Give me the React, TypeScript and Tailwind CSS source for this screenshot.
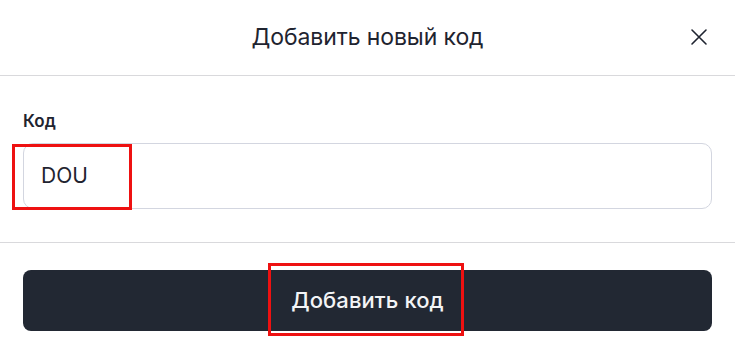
import React from "react";

export default function App() {
  return (
    <div className="relative w-[735px] h-[353px] bg-white overflow-hidden" style={{ fontFamily: "Inter, 'Noto Sans', sans-serif" }}>
      <div className="flex items-center justify-center h-[76px] border-b border-[#d9d9dc] relative">
        <h2 className="text-[23px] text-[#1f2430] font-normal tracking-[-0.1px] leading-none">Добавить новый код</h2>
        <button className="absolute right-[26px] top-[27px] w-[20px] h-[20px] flex items-center justify-center text-[#1f2430]">
          <svg width="18" height="18" viewBox="0 0 18 18" fill="none" stroke="currentColor" strokeWidth="1.6" strokeLinecap="round">
            <path d="M2 2L16 16M16 2L2 16" />
          </svg>
        </button>
      </div>
      <div className="px-[23px] pt-[35px] pb-[33px] border-b border-[#d9d9dc] flex flex-col gap-[12px]">
        <label className="block text-[17px] font-semibold text-[#1f2430] leading-[20px]">Код</label>
        <div className="h-[66px] rounded-[10px] border border-[#d3d6e0] flex items-center px-[17px]">
          <span className="text-[21px] text-[#1f2430]">DOU</span>
        </div>
      </div>
      <div className="px-[23px] pt-[27px]">
        <button className="w-full h-[61px] rounded-[8px] bg-[#222833] text-[#f3f4f6] text-[22px] font-medium flex items-center justify-center tracking-[0.1px]">
          Добавить код
        </button>
      </div>
      <div className="absolute left-[12px] top-[144px] w-[120px] h-[66px] border-[3px] border-[#ee1111] pointer-events-none" />
      <div className="absolute left-[268px] top-[263px] w-[196px] h-[73px] border-[3px] border-[#ee1111] pointer-events-none" />
    </div>
  );
}
